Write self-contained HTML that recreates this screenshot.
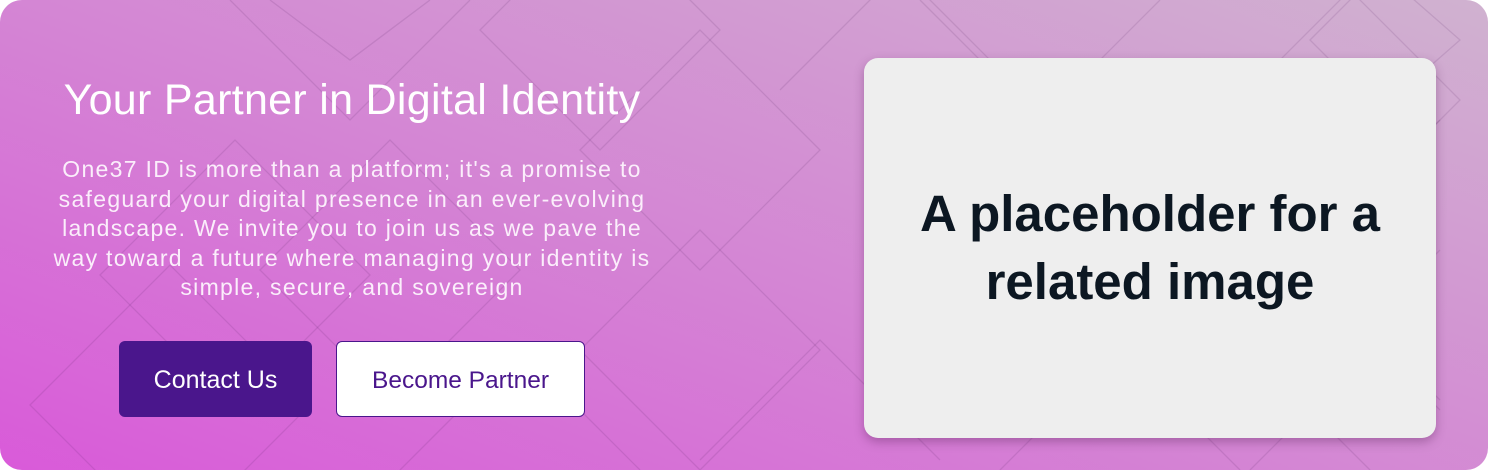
<!DOCTYPE html>
<html><head><style>
html,body{margin:0;width:1488px;height:470px;overflow:hidden;background:#fff;font-family:"Liberation Sans",sans-serif}
.wrap{position:absolute;left:0;top:0;width:1488px;height:470px;border-radius:22px;overflow:hidden;background:linear-gradient(20deg,#d95ad9 0%,#d484d4 45%,#d0b2d0 100%)}
svg.pat{position:absolute;left:0;top:0}
h1{position:absolute;left:0;width:704px;top:75px;margin:0;text-align:center;color:#fff;font-weight:400;font-size:43px;line-height:50px;letter-spacing:0.3px;white-space:nowrap}
p{position:absolute;left:0;width:704px;top:155px;margin:0;text-align:center;color:#fbeefb;font-size:23px;line-height:29.5px;letter-spacing:1.3px;white-space:nowrap}
.b{position:absolute;top:341px;height:76px;padding-top:3px;box-sizing:border-box;border-radius:6px;display:flex;align-items:center;justify-content:center}
.c1{left:119px;width:193px;background:#4a168c;color:#fff;font-size:25px}
.c2{left:336px;width:249px;background:#fff;color:#4a168c;border:1px solid #4a168c;font-size:24.5px}
.card{position:absolute;left:864px;top:58px;width:572px;height:380px;border-radius:14px;background:#eeeeee;box-shadow:0 4px 10px rgba(80,30,80,.35);display:flex;align-items:center;justify-content:center;text-align:center;color:#0c1722;font-weight:700;font-size:51px;line-height:68px;white-space:nowrap}
</style></head><body>
<div class="wrap">
<svg class="pat" width="1488" height="470" viewBox="0 0 1488 470" fill="none" stroke="rgba(80,30,90,0.13)" stroke-width="1.3">
<path d="M230 0 L350 120 L470 0 M270 0 L350 60 L430 0"/>
<path d="M260 270 L390 140 L520 270 L390 400 Z"/>
<path d="M30 405 L170 265 L310 405 L170 545 Z"/>
<path d="M100 275 L235 140 L370 275 L235 410 Z"/>
<path d="M580 150 L700 30 L820 150 L700 270 Z"/>
<path d="M480 30 L600 -90 L720 30 L600 150 Z"/>
<path d="M580 350 L700 230 L820 350 L700 470 Z"/>
<path d="M700 460 L820 340 L940 460"/>
<path d="M780 90 L900 -30 L1020 90"/>
<path d="M920 0 L1040 120 L1160 0"/>
<path d="M1240 100 L1350 -10 L1460 100 L1350 210"/>
<path d="M1310 40 L1380 -30 L1460 40 L1380 110 Z"/>
<path d="M1440 120 L1300 260 L1440 400 M1440 250 L1360 330 L1440 410"/>
<path d="M1000 470 L1120 350 L1240 470 M1250 470 L1310 410 L1370 470"/>
<path d="M400 470 L520 350 L640 470"/>
</svg>
<h1>Your Partner in Digital Identity</h1>
<p>One37 ID is more than a platform; it's a promise to<br>safeguard your digital presence in an ever-evolving<br>landscape. We invite you to join us as we pave the<br>way toward a future where managing your identity is<br>simple, secure, and sovereign</p>
<div class="b c1">Contact Us</div>
<div class="b c2">Become Partner</div>
<div class="card">A placeholder for a<br>related image</div>
</div>
</body></html>
